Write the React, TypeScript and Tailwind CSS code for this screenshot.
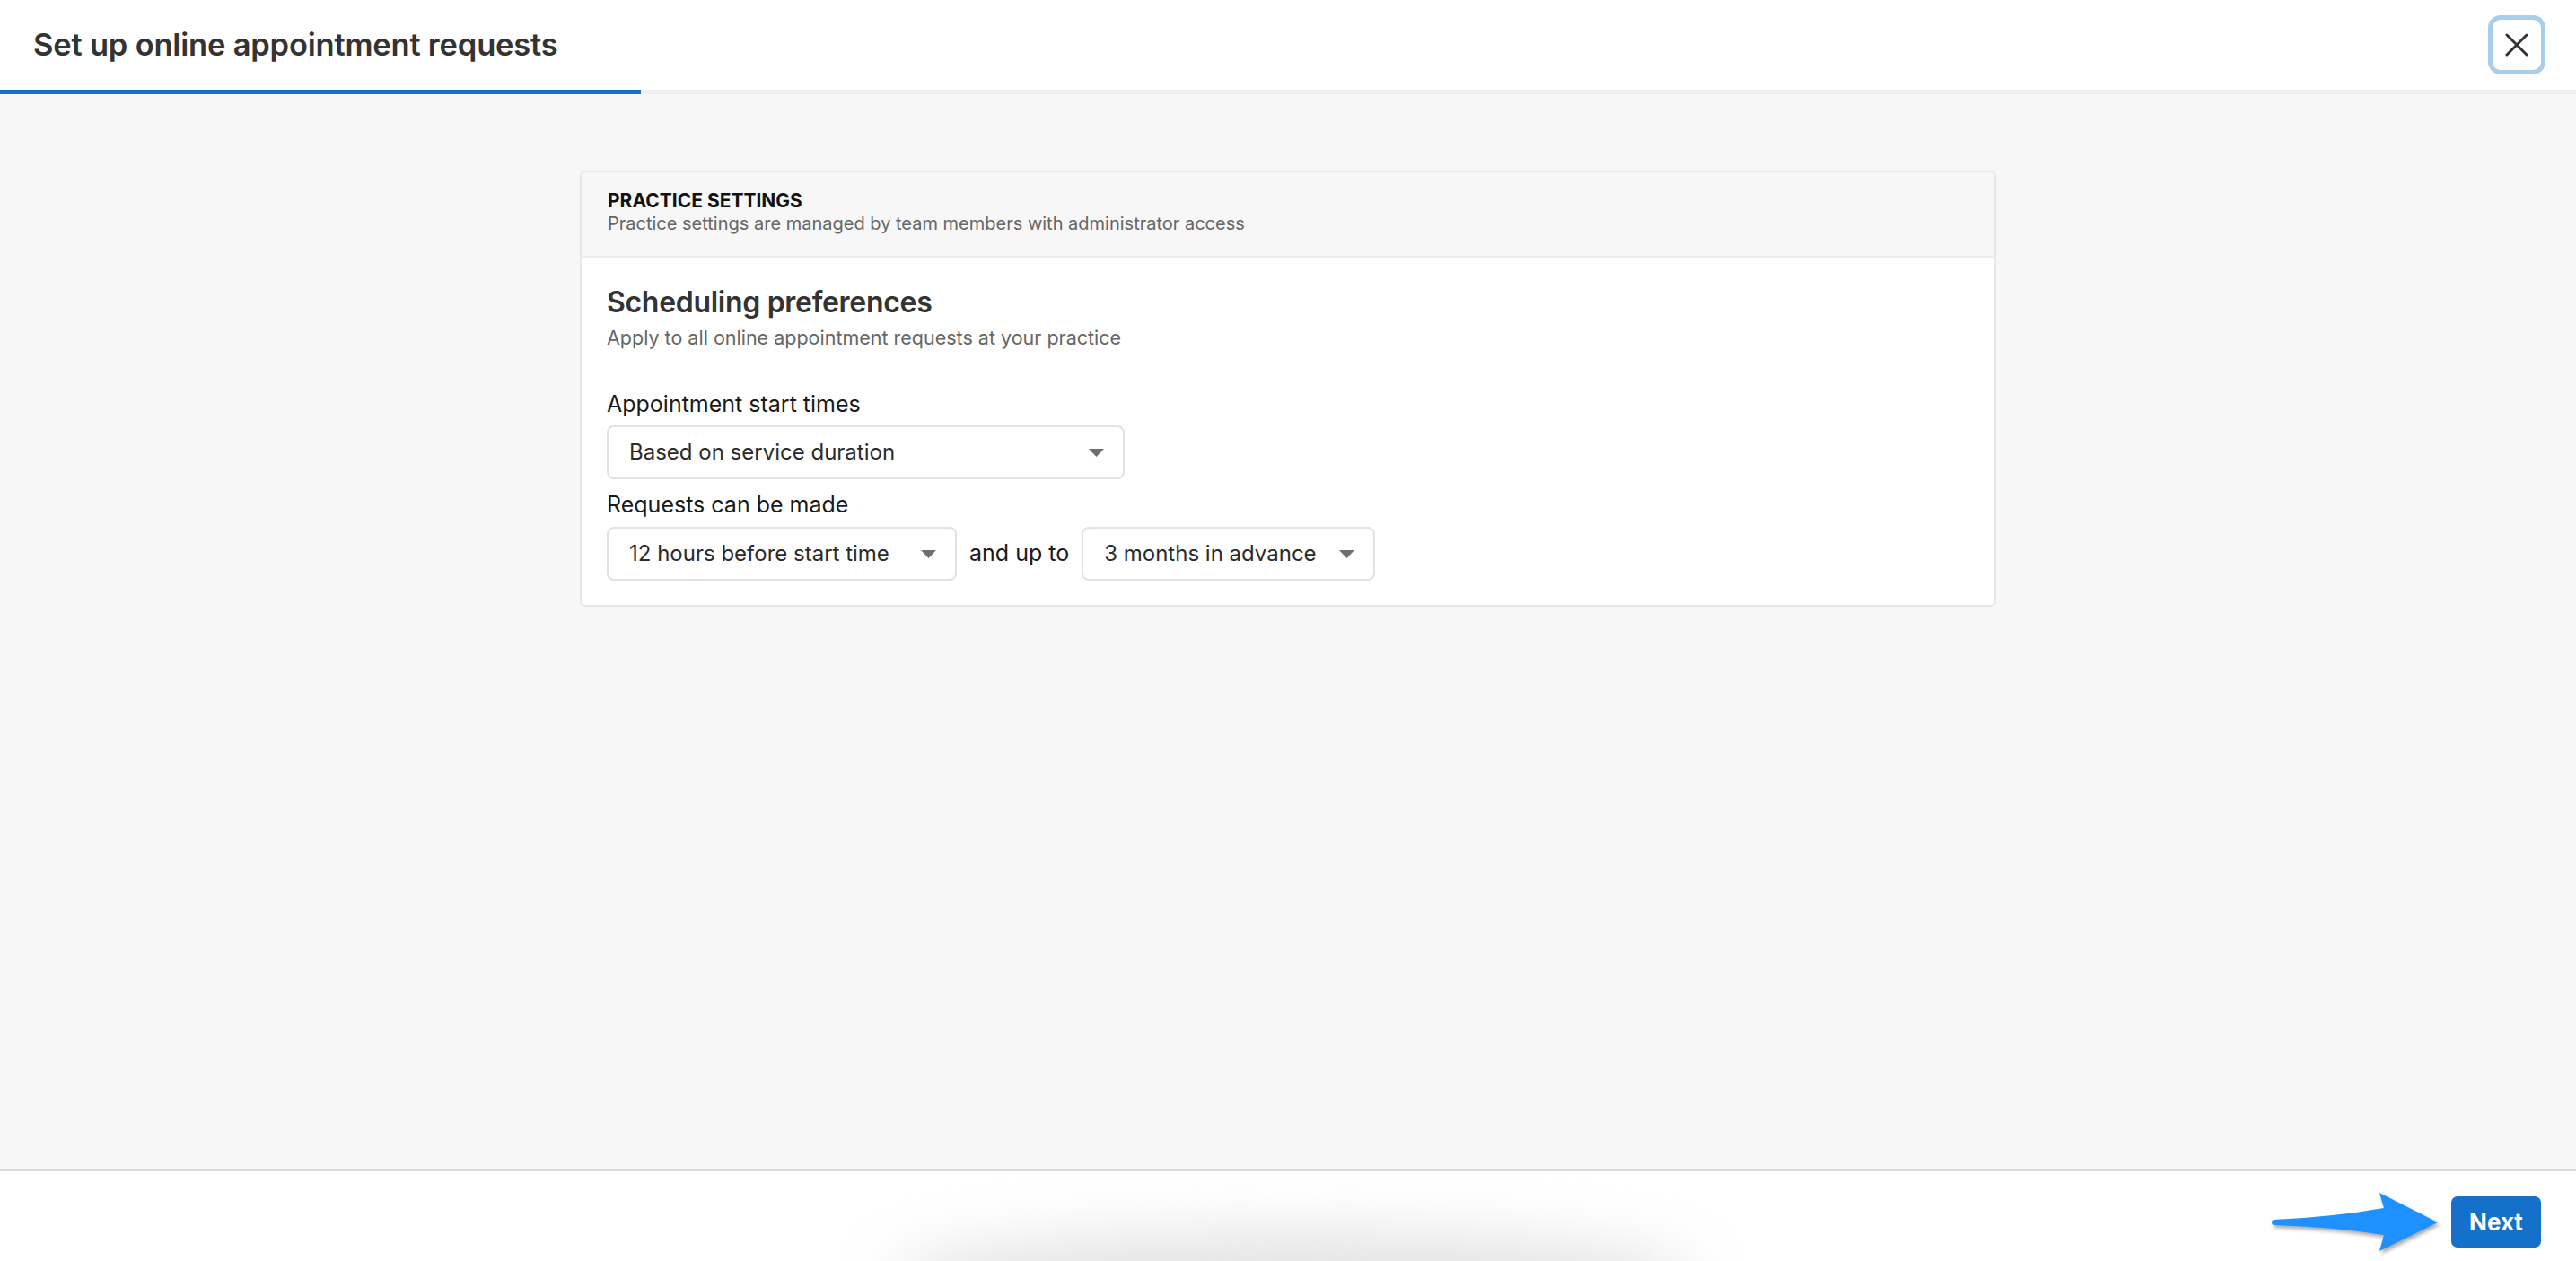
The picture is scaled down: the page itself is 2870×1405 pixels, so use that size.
import React from "react";

const font = { fontFamily: "Inter, 'Noto Sans', sans-serif" };

function Caret() {
  return (
    <svg width="17" height="9" viewBox="0 0 17 9" className="shrink-0">
      <path d="M0 0 H17 L8.5 9 Z" fill="#6e6e6e" />
    </svg>
  );
}

function Select({ value, width }: { value: string; width: string }) {
  return (
    <div
      className={`flex h-[60px] ${width} items-center justify-between rounded-[8px] border-2 border-[#e2e2e2] bg-white pl-[23px] pr-[21px] text-[24px] text-[#2b2b2b]`}
    >
      <span>{value}</span>
      <Caret />
    </div>
  );
}

function FooterArrow() {
  return (
    <svg width="190" height="73" viewBox="0 0 190 73" className="drop-shadow-[2px_3px_2px_rgba(0,0,0,0.35)]">
      <path
        d="M5 34 Q70 31 127 21 L122 4 L187 37 L122 69 L127 51 Q70 42 5 40 A3 3 0 0 1 5 34 Z"
        fill="#1e90ff"
      />
    </svg>
  );
}

export default function App() {
  return (
    <div className="flex h-[1405px] w-[2870px] flex-col overflow-hidden bg-[#f7f7f7]" style={font}>
      {/* header */}
      <header className="flex h-[100px] shrink-0 items-center justify-between bg-white pl-[37px] pr-[34px]">
        <h1 className="text-[34.5px] font-semibold tracking-[-0.2px] text-[#333333]">Set up online appointment requests</h1>
        <button className="flex h-[66px] w-[64px] items-center justify-center rounded-[14px] border-[5px] border-[#a9cdec] bg-white">
          <svg width="26" height="26" viewBox="0 0 26 26">
            <path d="M2 2 L24 24 M24 2 L2 24" stroke="#333" strokeWidth="3" strokeLinecap="round" />
          </svg>
        </button>
      </header>

      {/* progress */}
      <div className="h-[5px] shrink-0 bg-[#efefef]">
        <div className="h-full w-[714px] bg-[#1570cc]" />
      </div>

      {/* body */}
      <main className="flex flex-1 justify-center pt-[85px]">
        <div className="h-fit w-[1578px] overflow-hidden rounded-[6px] border-2 border-[#e6e6e6] bg-white">
          <div className="flex h-[95px] flex-col justify-center border-b-2 border-[#ececec] bg-[#f7f7f7] px-[29px] pb-[3px]">
            <div className="text-[21px] font-bold leading-[25px] text-[#111]">PRACTICE SETTINGS</div>
            <div className="text-[20px] leading-[27px] text-[#666]">Practice settings are managed by team members with administrator access</div>
          </div>
          <div className="px-[28px] pb-[27px] pt-[30px]">
            <h2 className="text-[32px] font-semibold leading-[40px] tracking-[-0.3px] text-[#333]">Scheduling preferences</h2>
            <p className="mt-[5px] text-[21.5px] leading-[28px] text-[#666]">Apply to all online appointment requests at your practice</p>

            <div className="mt-[45px] text-[25px] leading-[30px] text-[#1a1a1a]">Appointment start times</div>
            <div className="mt-[9px]">
              <Select value="Based on service duration" width="w-[577px]" />
            </div>

            <div className="mt-[13px] text-[25px] leading-[30px] text-[#1a1a1a]">Requests can be made</div>
            <div className="mt-[10px] flex items-center gap-[14px]">
              <Select value="12 hours before start time" width="w-[390px]" />
              <span className="text-[25px] text-[#1a1a1a]">and up to</span>
              <Select value="3 months in advance" width="w-[327px]" />
            </div>
          </div>
        </div>
      </main>

      {/* footer */}
      <footer className="relative flex h-[102px] shrink-0 items-center justify-end gap-[12px] overflow-hidden border-t-2 border-[#dcdcdc] bg-white pr-[39px] pt-[12px]">
        <div className="absolute left-[990px] top-[66px] h-[110px] w-[900px] rounded-[50%] bg-[#e4e4e4] blur-[32px]" />
        <FooterArrow />
        <button className="relative h-[57px] w-[100px] rounded-[7px] bg-[#1570c9] text-[26px] font-bold text-white">Next</button>
      </footer>
    </div>
  );
}
